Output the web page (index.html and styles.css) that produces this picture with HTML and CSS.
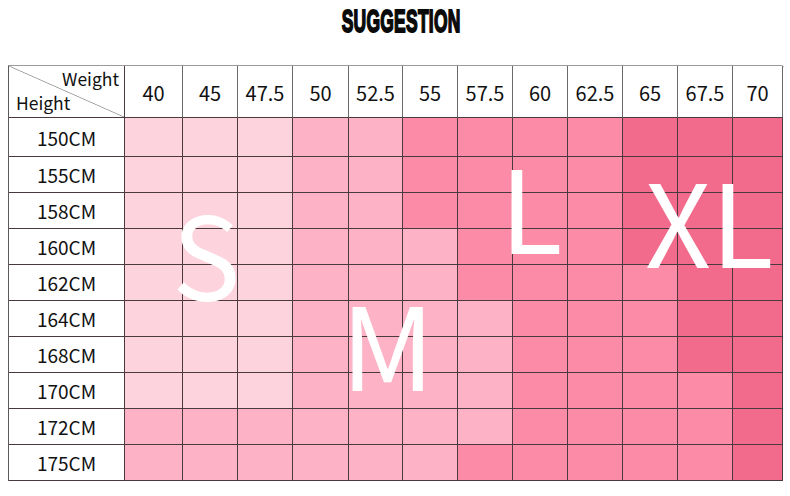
FILE: index.html
```html
<!DOCTYPE html>
<html>
<head>
<meta charset="utf-8">
<link rel="stylesheet" href="styles.css">
</head>
<body>
<div class="page">
  <h1 class="title"><span class="title-text">SUGGESTION</span></h1>
  <div class="chart">
    <div class="grid">
      <div class="corner"><span class="corner-w">Weight</span><span class="corner-h">Height</span></div>
      <div class="hd">40</div><div class="hd">45</div><div class="hd">47.5</div><div class="hd">50</div><div class="hd">52.5</div><div class="hd">55</div><div class="hd">57.5</div><div class="hd">60</div><div class="hd">62.5</div><div class="hd">65</div><div class="hd">67.5</div><div class="hd">70</div>

      <div class="rl">150CM</div><div class="c s"></div><div class="c s"></div><div class="c s"></div><div class="c m"></div><div class="c m"></div><div class="c l"></div><div class="c l"></div><div class="c l"></div><div class="c l"></div><div class="c x"></div><div class="c x"></div><div class="c x"></div>
      <div class="rl">155CM</div><div class="c s"></div><div class="c s"></div><div class="c s"></div><div class="c m"></div><div class="c m"></div><div class="c l"></div><div class="c l"></div><div class="c l"></div><div class="c l"></div><div class="c x"></div><div class="c x"></div><div class="c x"></div>
      <div class="rl">158CM</div><div class="c s"></div><div class="c s"></div><div class="c s"></div><div class="c m"></div><div class="c m"></div><div class="c l"></div><div class="c l"></div><div class="c l"></div><div class="c l"></div><div class="c x"></div><div class="c x"></div><div class="c x"></div>
      <div class="rl">160CM</div><div class="c s"></div><div class="c s"></div><div class="c s"></div><div class="c m"></div><div class="c m"></div><div class="c m"></div><div class="c l"></div><div class="c l"></div><div class="c l"></div><div class="c x"></div><div class="c x"></div><div class="c x"></div>
      <div class="rl">162CM</div><div class="c s"></div><div class="c s"></div><div class="c s"></div><div class="c m"></div><div class="c m"></div><div class="c m"></div><div class="c l"></div><div class="c l"></div><div class="c l"></div><div class="c l"></div><div class="c x"></div><div class="c x"></div>
      <div class="rl">164CM</div><div class="c s"></div><div class="c s"></div><div class="c s"></div><div class="c m"></div><div class="c m"></div><div class="c m"></div><div class="c m"></div><div class="c l"></div><div class="c l"></div><div class="c l"></div><div class="c x"></div><div class="c x"></div>
      <div class="rl">168CM</div><div class="c s"></div><div class="c s"></div><div class="c s"></div><div class="c m"></div><div class="c m"></div><div class="c m"></div><div class="c m"></div><div class="c l"></div><div class="c l"></div><div class="c l"></div><div class="c x"></div><div class="c x"></div>
      <div class="rl">170CM</div><div class="c s"></div><div class="c s"></div><div class="c s"></div><div class="c m"></div><div class="c m"></div><div class="c m"></div><div class="c m"></div><div class="c l"></div><div class="c l"></div><div class="c l"></div><div class="c l"></div><div class="c x"></div>
      <div class="rl">172CM</div><div class="c m"></div><div class="c m"></div><div class="c m"></div><div class="c m"></div><div class="c m"></div><div class="c m"></div><div class="c m"></div><div class="c l"></div><div class="c l"></div><div class="c l"></div><div class="c l"></div><div class="c x"></div>
      <div class="rl">175CM</div><div class="c m"></div><div class="c m"></div><div class="c m"></div><div class="c m"></div><div class="c m"></div><div class="c m"></div><div class="c l"></div><div class="c l"></div><div class="c l"></div><div class="c l"></div><div class="c l"></div><div class="c x"></div>
    </div>
    <span class="big big-s">S</span>
    <span class="big big-m">M</span>
    <span class="big big-l">L</span>
    <span class="big big-xl">XL</span>
  </div>
</div>
</body>
</html>
```

FILE: styles.css
```css
html, body {
  margin: 0;
  padding: 0;
  background: #ffffff;
}

.page {
  width: 790px;
  height: 496px;
  font-family: "Noto Sans CJK SC", "Noto Sans", sans-serif;
  color: #111111;
}

.title {
  margin: 0;
  height: 65px;
  display: flex;
  justify-content: center;
  padding-left: 12px;
  box-sizing: border-box;
}

.title-text {
  display: inline-block;
  font-family: "Liberation Sans", Arial, sans-serif;
  font-weight: 700;
  font-size: 32px;
  line-height: 32px;
  margin-top: 5px;
  letter-spacing: 0.5px;
  color: #0a0a0a;
  -webkit-text-stroke: 1.9px #0a0a0a;
  transform: scaleX(0.545);
  transform-origin: center;
}

.chart {
  position: relative;
  margin-left: 8px;
  width: 776px;
}

.grid {
  display: grid;
  grid-template-columns: 116px 58px 55px 55px 56px 54px 55px 55px 55px 55px 55px 55px 50px;
  grid-template-rows: 52px 39px repeat(9, 36px);
  border-left: 1px solid #5a5a5a;
  border-top: 1px solid #9a9a9a;
  border-top-right-radius: 3px;
}

.grid > div {
  box-sizing: border-box;
  border-right: 1px solid #4a3a40;
  border-bottom: 1px solid #4a3a40;
}

.corner {
  position: relative;
  background: linear-gradient(to top right, #ffffff calc(50% - 0.8px), #9a9a9a 50%, #ffffff calc(50% + 0.8px));
  font-size: 17.5px;
  line-height: 20px;
}

.corner-w {
  position: absolute;
  right: 5px;
  top: 3px;
}

.corner-h {
  position: absolute;
  left: 7px;
  top: 27px;
}

.hd {
  background: #ffffff;
  font-size: 20px;
  display: flex;
  align-items: center;
  justify-content: center;
  padding-top: 2px;
}

.grid > .hd {
  border-right-color: #6a6a6a;
}

.rl {
  background: #ffffff;
  font-size: 19px;
  display: flex;
  align-items: center;
  justify-content: center;
}

.c.s { background: #fdd4de; }
.c.m { background: #fdb2c5; }
.c.l { background: #fb8ba7; }
.c.x { background: #f36b8c; }

.big {
  position: absolute;
  font-family: "Noto Sans CJK SC", "Noto Sans", sans-serif;
  font-weight: 400;
  font-size: 115px;
  line-height: 115px;
  color: #ffffff;
}

.big-s { left: 164px; top: 129px; }
.big-m { left: 333px; top: 219px; }
.big-l { left: 492px; top: 82px; }
.big-xl { left: 637px; top: 96px; }
```
